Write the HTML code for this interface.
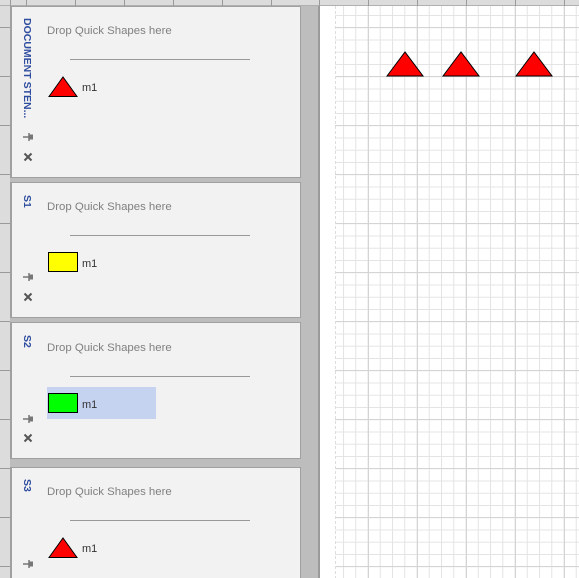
<!DOCTYPE html>
<html style="overflow:hidden"><head><style>
*{margin:0;padding:0;box-sizing:border-box}
html,body{width:579px;height:578px;overflow:hidden}
body{background:#bdbdbd;position:relative;font-family:"Liberation Sans","DejaVu Sans",sans-serif}
.abs{position:absolute}
.panel{position:absolute;left:10px;width:291px;background:#f2f2f2;border:1px solid #a0a0a0;border-left:2px solid #a0a0a0;overflow:hidden}
.title{position:absolute;left:9px;top:10px;writing-mode:vertical-rl;color:#2e4d9f;font-weight:bold;font-size:10.5px;white-space:nowrap}
.drop{position:absolute;left:35px;color:#808080;font-size:11.4px;white-space:nowrap}
.line{position:absolute;left:58px;width:180px;height:1px;background:#999}
.m1{position:absolute;left:70px;font-size:11px;color:#333}
.pin{position:absolute;left:11px;width:11px;height:8px}
.x{position:absolute;left:11px;width:10px;height:10px}
</style></head><body>
<div class="abs" style="left:0;top:0;width:579px;height:6px;background:#dcdcdc;border-bottom:1px solid #b0b0b0"></div>
<svg class="abs" style="left:0;top:0" width="579" height="6">
<g stroke="#9a9a9a"><line x1="10.5" y1="0" x2="10.5" y2="6"/><line x1="26.5" y1="0" x2="26.5" y2="6"/><line x1="75.5" y1="0" x2="75.5" y2="6"/><line x1="124.5" y1="0" x2="124.5" y2="6"/><line x1="173.5" y1="0" x2="173.5" y2="6"/><line x1="222.5" y1="0" x2="222.5" y2="6"/><line x1="271.5" y1="0" x2="271.5" y2="6"/><line x1="319.5" y1="0" x2="319.5" y2="6"/><line x1="368.5" y1="0" x2="368.5" y2="6"/><line x1="417.5" y1="0" x2="417.5" y2="6"/><line x1="466.5" y1="0" x2="466.5" y2="6"/><line x1="515.5" y1="0" x2="515.5" y2="6"/><line x1="564.5" y1="0" x2="564.5" y2="6"/></g></svg>
<div class="abs" style="left:0;top:6px;width:10px;height:572px;background:#dcdcdc"></div>
<svg class="abs" style="left:0;top:0" width="10" height="578">
<g stroke="#9a9a9a"><line x1="0" y1="27.5" x2="10" y2="27.5"/><line x1="0" y1="76.5" x2="10" y2="76.5"/><line x1="0" y1="125.5" x2="10" y2="125.5"/><line x1="0" y1="174.5" x2="10" y2="174.5"/><line x1="0" y1="223.5" x2="10" y2="223.5"/><line x1="0" y1="272.5" x2="10" y2="272.5"/><line x1="0" y1="321.5" x2="10" y2="321.5"/><line x1="0" y1="370.5" x2="10" y2="370.5"/><line x1="0" y1="419.5" x2="10" y2="419.5"/><line x1="0" y1="468.5" x2="10" y2="468.5"/><line x1="0" y1="517.5" x2="10" y2="517.5"/><line x1="0" y1="566.5" x2="10" y2="566.5"/></g></svg>
<div class="abs" style="left:318px;top:6px;width:2px;height:572px;background:#9a9a9a"></div>
<div class="abs" style="left:320px;top:6px;width:259px;height:572px;background:#fff"></div>
<svg class="abs" style="left:320px;top:0" width="259" height="578">
<defs>
<pattern id="mn" x="23" y="15" width="12.25" height="12.25" patternUnits="userSpaceOnUse"><path d="M0.5 0V12.25M0 0.5H12.25" stroke="#e4e4e4" fill="none"/></pattern>
<pattern id="mj" x="48" y="27" width="49" height="49" patternUnits="userSpaceOnUse"><path d="M0.5 0V49M0 0.5H49" stroke="#d4d4d4" fill="none"/></pattern>
</defs>
<rect x="15" y="6" width="244" height="572" fill="url(#mn)"/>
<rect x="15" y="6" width="244" height="572" fill="url(#mj)"/>
<line x1="15.5" y1="6" x2="15.5" y2="578" stroke="#ddd" stroke-dasharray="3,2"/>
<g fill="#f00" stroke="#000" stroke-width="1">
<polygon points="67,76 85,52 103,76"/>
<polygon points="123,76 141,52 159,76"/>
<polygon points="196,76 214,52 232,76"/>
</g></svg>

<div class="panel" style="top:6px;height:172px">
<div class="title" style="top:11px">DOCUMENT STEN...</div>
<div class="drop" style="top:18px">Drop Quick Shapes here</div>
<div class="line" style="top:52px"></div>
<svg class="abs" style="left:36px;top:69px" width="32" height="22"><polygon points="1,20.5 15,1 29,20.5" fill="#f00" stroke="#000"/></svg>
<div class="m1" style="top:75px">m1</div>
<svg class="pin" style="top:126px" viewBox="0 0 11 8"><path d="M0 4H6M6 0V8" stroke="#777" stroke-width="1.5" fill="none"/><rect x="6" y="1.5" width="4" height="5" fill="#777"/></svg>
<svg class="x" style="top:145px" viewBox="0 0 10 10"><path d="M1.5 1.5L8.5 8.5M8.5 1.5L1.5 8.5" stroke="#555" stroke-width="2"/></svg>
</div>
<div class="panel" style="top:182px;height:136px">
<div class="title" style="top:12px">S1</div>
<div class="drop" style="top:18px">Drop Quick Shapes here</div>
<div class="line" style="top:52px"></div>
<div class="abs" style="left:36px;top:69px;width:30px;height:20px;background:#ff0;border:1px solid #000"></div>
<div class="m1" style="top:75px">m1</div>
<svg class="pin" style="top:90px" viewBox="0 0 11 8"><path d="M0 4H6M6 0V8" stroke="#777" stroke-width="1.5" fill="none"/><rect x="6" y="1.5" width="4" height="5" fill="#777"/></svg>
<svg class="x" style="top:109px" viewBox="0 0 10 10"><path d="M1.5 1.5L8.5 8.5M8.5 1.5L1.5 8.5" stroke="#555" stroke-width="2"/></svg>
</div>
<div class="panel" style="top:322px;height:137px">
<div class="title" style="top:12px">S2</div>
<div class="drop" style="top:19px">Drop Quick Shapes here</div>
<div class="line" style="top:53px"></div>
<div class="abs" style="left:35px;top:64px;width:109px;height:32px;background:#c5d3f1"></div>
<div class="abs" style="left:36px;top:70px;width:30px;height:20px;background:#0f0;border:1px solid #000"></div>
<div class="m1" style="top:76px">m1</div>
<svg class="pin" style="top:92px" viewBox="0 0 11 8"><path d="M0 4H6M6 0V8" stroke="#777" stroke-width="1.5" fill="none"/><rect x="6" y="1.5" width="4" height="5" fill="#777"/></svg>
<svg class="x" style="top:110px" viewBox="0 0 10 10"><path d="M1.5 1.5L8.5 8.5M8.5 1.5L1.5 8.5" stroke="#555" stroke-width="2"/></svg>
</div>
<div class="panel" style="top:467px;height:111px;border-bottom:none">
<div class="title" style="top:11px">S3</div>
<div class="drop" style="top:18px">Drop Quick Shapes here</div>
<div class="line" style="top:52px"></div>
<svg class="abs" style="left:36px;top:69px" width="32" height="22"><polygon points="1,20.5 15,1 29,20.5" fill="#f00" stroke="#000"/></svg>
<div class="m1" style="top:75px">m1</div>
<svg class="pin" style="top:92px" viewBox="0 0 11 8"><path d="M0 4H6M6 0V8" stroke="#777" stroke-width="1.5" fill="none"/><rect x="6" y="1.5" width="4" height="5" fill="#777"/></svg>
</div>
</body></html>
